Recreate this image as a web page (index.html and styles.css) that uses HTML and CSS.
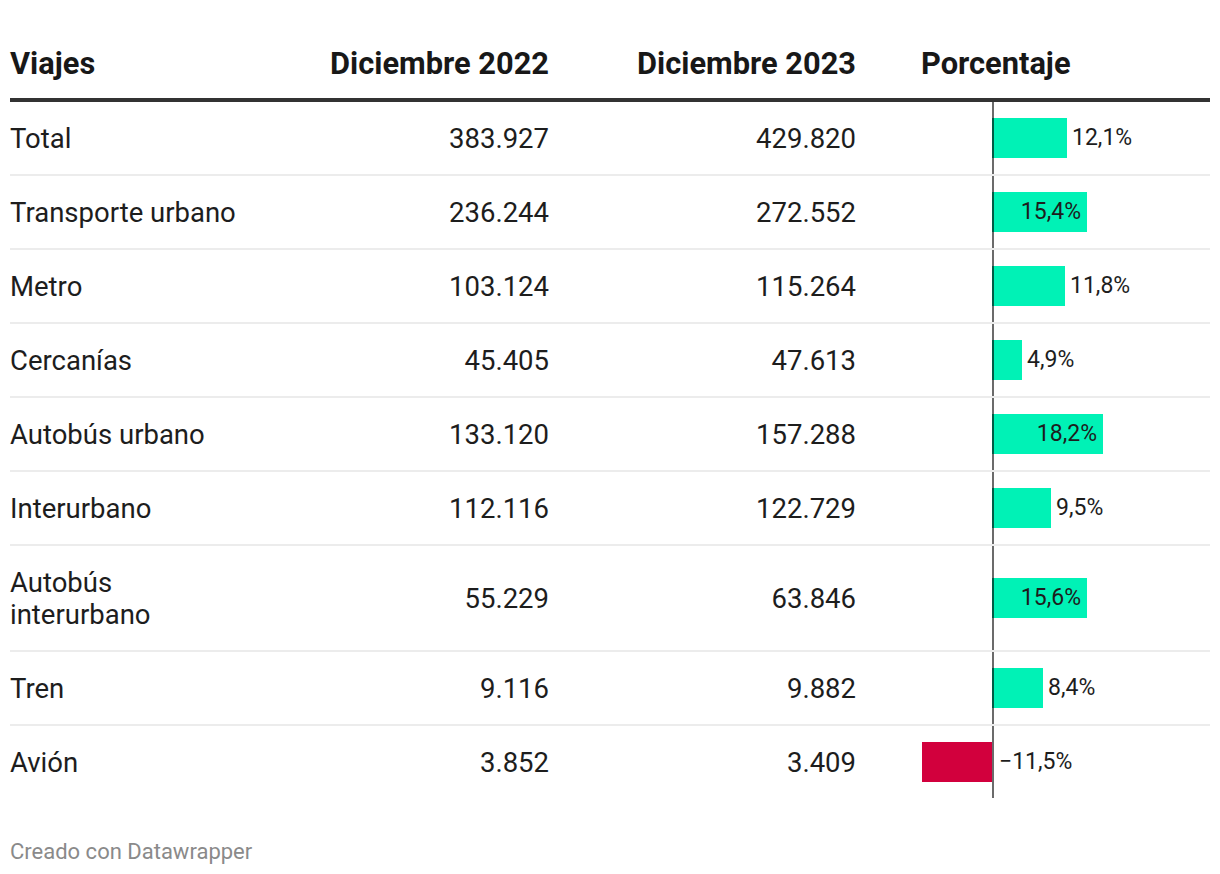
FILE: index.html
```html
<!DOCTYPE html>
<html lang="es">
<head>
<meta charset="utf-8">
<title>Viajes</title>
<link rel="stylesheet" href="styles.css">
</head>
<body>
<div class="wrap">
  <div class="table">
    <div class="row head">
      <div class="cell c1">Viajes</div>
      <div class="cell num">Diciembre 2022</div>
      <div class="cell num">Diciembre 2023</div>
      <div class="cell c4">Porcentaje</div>
    </div>

    <div class="row">
      <div class="cell c1">Total</div>
      <div class="cell num">383.927</div>
      <div class="cell num">429.820</div>
      <div class="chart"><div class="neg"></div><div class="pos"><div class="bar" style="width:75px"></div><span class="lbl">12,1%</span></div></div>
    </div>
    <div class="row">
      <div class="cell c1">Transporte urbano</div>
      <div class="cell num">236.244</div>
      <div class="cell num">272.552</div>
      <div class="chart"><div class="neg"></div><div class="pos"><div class="bar in" style="width:95px"><span class="lbl">15,4%</span></div></div></div>
    </div>
    <div class="row">
      <div class="cell c1">Metro</div>
      <div class="cell num">103.124</div>
      <div class="cell num">115.264</div>
      <div class="chart"><div class="neg"></div><div class="pos"><div class="bar" style="width:73px"></div><span class="lbl">11,8%</span></div></div>
    </div>
    <div class="row">
      <div class="cell c1">Cercanías</div>
      <div class="cell num">45.405</div>
      <div class="cell num">47.613</div>
      <div class="chart"><div class="neg"></div><div class="pos"><div class="bar" style="width:30px"></div><span class="lbl">4,9%</span></div></div>
    </div>
    <div class="row">
      <div class="cell c1">Autobús urbano</div>
      <div class="cell num">133.120</div>
      <div class="cell num">157.288</div>
      <div class="chart"><div class="neg"></div><div class="pos"><div class="bar in" style="width:111px"><span class="lbl">18,2%</span></div></div></div>
    </div>
    <div class="row">
      <div class="cell c1">Interurbano</div>
      <div class="cell num">112.116</div>
      <div class="cell num">122.729</div>
      <div class="chart"><div class="neg"></div><div class="pos"><div class="bar" style="width:59px"></div><span class="lbl">9,5%</span></div></div>
    </div>
    <div class="row">
      <div class="cell c1">Autobús interurbano</div>
      <div class="cell num">55.229</div>
      <div class="cell num">63.846</div>
      <div class="chart"><div class="neg"></div><div class="pos"><div class="bar in" style="width:95px"><span class="lbl">15,6%</span></div></div></div>
    </div>
    <div class="row">
      <div class="cell c1">Tren</div>
      <div class="cell num">9.116</div>
      <div class="cell num">9.882</div>
      <div class="chart"><div class="neg"></div><div class="pos"><div class="bar" style="width:51px"></div><span class="lbl">8,4%</span></div></div>
    </div>
    <div class="row last">
      <div class="cell c1">Avión</div>
      <div class="cell num">3.852</div>
      <div class="cell num">3.409</div>
      <div class="chart"><div class="neg"><div class="bar red" style="width:70px"></div></div><div class="pos"><span class="lbl nl">−11,5%</span></div></div>
    </div>
  </div>
  <div class="footer">Creado con Datawrapper</div>
</div>
</body>
</html>
```

FILE: styles.css
```css
html, body {
  margin: 0;
  padding: 0;
  background: #fff;
}
body {
  font-family: Roboto, "Liberation Sans", sans-serif;
  color: #1d1d1d;
}
.wrap {
  padding: 10px 10px 0 10px;
}
.table {
  display: flex;
  flex-direction: column;
}
.row {
  display: grid;
  grid-template-columns: 245px 294px 307px 354px;
  border-bottom: 2px solid #ececec;
}
.row.last {
  border-bottom-color: transparent;
}
.row.head {
  height: 88px;
  border-bottom: 4px solid #333;
  align-items: end;
  font-weight: 700;
  color: #181818;
}
.cell {
  font-size: 27.5px;
  line-height: 32px;
  padding: 21px 0 19px 0;
  align-self: center;
}
.row.head .cell {
  font-size: 30.8px;
  line-height: 36px;
  padding: 0 0 16px 0;
  align-self: end;
}
.num {
  text-align: right;
}
.row.head .c4 {
  padding-left: 65px;
}
.chart {
  display: flex;
  align-items: stretch;
  padding-left: 65px;
}
.neg {
  width: 71px;
  display: flex;
  align-items: center;
  justify-content: flex-end;
}
.pos {
  flex: 1;
  display: flex;
  align-items: center;
  border-left: 2px solid #6b6b6b;
}
.bar {
  height: 40px;
  background: #00f2b6;
  margin-left: -2px;
  box-shadow: inset 2px 0 0 rgba(0, 0, 0, 0.62);
  display: flex;
  align-items: center;
  justify-content: flex-end;
  flex: none;
}
.bar.red {
  background: #d2003d;
  margin-left: 0;
  box-shadow: none;
}
.lbl {
  font-size: 23px;
  line-height: 28px;
  color: #1d1d1d;
  padding-left: 5px;
}
.bar.in .lbl {
  padding-left: 0;
  padding-right: 6px;
}
.footer {
  margin-top: 39px;
  font-size: 22px;
  line-height: 26px;
  color: #8a8a8a;
}
```
